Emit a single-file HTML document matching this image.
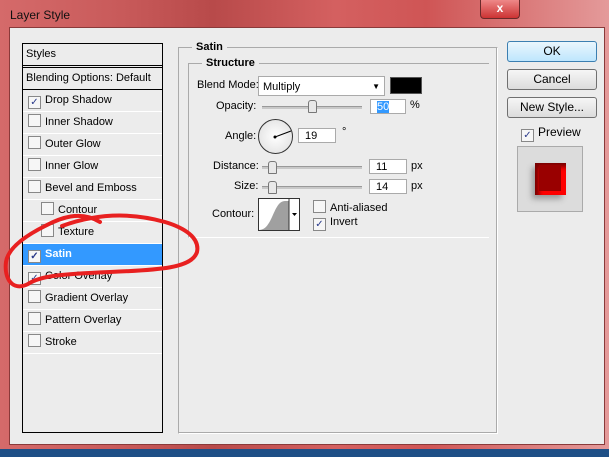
<!DOCTYPE html><html><head><style>
body{margin:0;width:609px;height:457px;overflow:hidden;background:#2a5a8a;font-family:"Liberation Sans",Arial,sans-serif;font-size:11px;color:#000;position:relative}
.a{position:absolute;white-space:nowrap}
.win{left:0;top:0;width:609px;height:449px;background:linear-gradient(90deg,#d56a6a,#c85a5a 20%,#b84a4a 35%,#d46060 55%,#cf5555 70%,#e49a9a 100%)}
.client{left:9px;top:27px;width:594px;height:416px;background:#ececec;border:1px solid #8a3a3a}
.row{position:absolute;left:0;width:139px;height:21px;border-bottom:1px solid #fff;line-height:21px;white-space:nowrap}
.cb{display:inline-block;width:11px;height:11px;border:1px solid #888;background:#f6f6f6;vertical-align:-2px;margin-right:4px;position:relative;font-size:10px;line-height:11px;text-align:center;color:#2a3a8a}
.btn{position:absolute;left:507px;width:88px;height:19px;border:1px solid #707070;border-radius:3px;background:linear-gradient(#f6f6f6,#dcdcdc);text-align:center;line-height:19px;font-size:12px}
.inp{position:absolute;background:#fff;border:1px solid #aaa;height:15px;line-height:15px;padding-left:6px;box-sizing:border-box;width:38px}
.sl{position:absolute;height:2px;background:#c8c8c8;border-top:1px solid #999;width:100px}
.th{position:absolute;width:7px;height:11px;background:#e8e8e8;border:1px solid #777;border-radius:3px 3px 1px 1px}
</style></head><body>
<div class="a win"></div>
<div class="a" style="left:10px;top:8px;font-size:12px;color:#111">Layer Style</div>
<div class="a" style="left:480px;top:0;width:38px;height:18px;border:1px solid #6a2a2a;border-top:none;border-radius:0 0 4px 4px;background:linear-gradient(#e88,#c33);color:#fff;text-align:center;font-weight:bold;font-size:12px;line-height:16px">x</div>
<div class="a client"></div>
<div class="a" style="left:22px;top:43px;width:139px;height:388px;border:1px solid #000;background:#ececec">
<div class="row" style="top:0;height:21px;border-bottom:3px double #000">&nbsp;Styles</div>
<div class="row" style="top:24px;border-bottom:1px solid #000">&nbsp;Blending Options: Default</div>
<div class="row" style="top:46px;padding-left:5px;width:134px"><span class="cb">✓</span>Drop Shadow</div>
<div class="row" style="top:68px;padding-left:5px;width:134px"><span class="cb"></span>Inner Shadow</div>
<div class="row" style="top:90px;padding-left:5px;width:134px"><span class="cb"></span>Outer Glow</div>
<div class="row" style="top:112px;padding-left:5px;width:134px"><span class="cb"></span>Inner Glow</div>
<div class="row" style="top:134px;padding-left:5px;width:134px"><span class="cb"></span>Bevel and Emboss</div>
<div class="row" style="top:156px;padding-left:18px;width:121px"><span class="cb"></span>Contour</div>
<div class="row" style="top:178px;padding-left:18px;width:121px"><span class="cb"></span>Texture</div>
<div class="row" style="top:200px;padding-left:5px;width:134px;background:#3399ff;color:#fff;font-weight:bold"><span class="cb">✓</span>Satin</div>
<div class="row" style="top:222px;padding-left:5px;width:134px"><span class="cb">✓</span>Color Overlay</div>
<div class="row" style="top:244px;padding-left:5px;width:134px"><span class="cb"></span>Gradient Overlay</div>
<div class="row" style="top:266px;padding-left:5px;width:134px"><span class="cb"></span>Pattern Overlay</div>
<div class="row" style="top:288px;padding-left:5px;width:134px"><span class="cb"></span>Stroke</div>
</div>
<div class="a" style="left:178px;top:47px;width:318px;height:385px;border:1px solid #aaa;border-right-color:#fff;border-bottom-color:#fff;box-shadow:inset -1px -1px #aaa"></div>
<div class="a" style="left:192px;top:41px;background:#ececec;padding:0 4px;font-weight:bold">Satin</div>
<div class="a" style="left:188px;top:63px;width:300px;height:173px;border:1px solid #aaa;border-right:none;border-bottom-color:#fff"></div>
<div class="a" style="left:202px;top:57px;background:#ececec;padding:0 4px;font-weight:bold">Structure</div>
<div class="a" style="left:197px;top:79px">Blend Mode:</div>
<div class="a" style="left:258px;top:76px;width:127px;height:20px;background:#fff;border:1px solid #aaa;line-height:20px;padding-left:4px;box-sizing:border-box">Multiply<span style="position:absolute;right:4px;font-size:8px">▼</span></div>
<div class="a" style="left:390px;top:77px;width:30px;height:15px;background:#000;border:1px solid #555"></div>
<div class="a" style="left:216px;top:100px">Opacity:</div>
<div class="sl" style="left:262px;top:106px"></div><div class="th" style="left:308px;top:100px"></div>
<div class="inp" style="left:370px;top:99px;width:36px"><span style="background:#3399ff;color:#fff">50</span></div>
<div class="a" style="left:410px;top:99px">%</div>
<div class="a" style="left:225px;top:130px">Angle:</div>
<div class="a" style="left:258px;top:119px;width:33px;height:33px;border-radius:50%;border:1px solid #333;background:radial-gradient(#fff,#ddd)"></div>
<svg class="a" style="left:258px;top:119px" width="36" height="36"><line x1="17" y1="18" x2="33" y2="12" stroke="#000" stroke-width="1"/><circle cx="17" cy="18" r="1.5"/></svg>
<div class="inp" style="left:298px;top:128px">19</div>
<div class="a" style="left:342px;top:126px">°</div>
<div class="a" style="left:213px;top:160px">Distance:</div>
<div class="sl" style="left:262px;top:166px"></div><div class="th" style="left:268px;top:161px"></div>
<div class="inp" style="left:369px;top:159px">11</div><div class="a" style="left:411px;top:160px">px</div>
<div class="a" style="left:234px;top:180px">Size:</div>
<div class="sl" style="left:262px;top:186px"></div><div class="th" style="left:268px;top:181px"></div>
<div class="inp" style="left:369px;top:179px">14</div><div class="a" style="left:411px;top:180px">px</div>
<div class="a" style="left:212px;top:208px">Contour:</div>
<div class="a" style="left:258px;top:198px;width:40px;height:31px;border:1px solid #333;background:#fff;overflow:hidden">
<svg width="40" height="31"><path d="M0 31 C14 31 14 2 26 2 L30 2 L30 31Z" fill="#a0a0a0"/><line x1="30" y1="0" x2="30" y2="31" stroke="#333"/><path d="M33 14h5l-2.5 3z"/></svg></div>
<div class="a" style="left:313px;top:200px"><span class="cb"></span>Anti-aliased</div>
<div class="a" style="left:313px;top:216px"><span class="cb">✓</span>Invert</div>
<div class="btn" style="top:41px;border-color:#3c7fb1;background:linear-gradient(#eaf6fd,#bee6fd)">OK</div>
<div class="btn" style="top:69px">Cancel</div>
<div class="btn" style="top:97px">New Style...</div>
<div class="a" style="left:521px;top:125px;font-size:12px"><span class="cb">✓</span>Preview</div>
<div class="a" style="left:517px;top:146px;width:64px;height:64px;border:1px solid #aaa;background:#dcdcdc">
<div class="a" style="left:14px;top:20px;width:30px;height:32px;background:#999;filter:blur(3px)"></div>
<div class="a" style="left:17px;top:16px;width:31px;height:32px;background:#f00;box-shadow:inset 4px 4px 5px #700"></div>
<div class="a" style="left:21px;top:18px;width:22px;height:26px;background:#900"></div></div>
<svg class="a" style="left:0;top:0" width="609" height="457"><path d="M100 222 C80 210 60 218 45 226 C25 236 8 248 6 262 C4 278 12 292 28 284 C40 276 60 274 110 272 C160 270 192 268 197 252 C200 238 185 228 165 222 C130 212 95 214 62 226" fill="none" stroke="#e82020" stroke-width="4" stroke-linecap="round"/></svg>
<div class="a" style="left:0;top:449px;width:609px;height:8px;background:#1e4f86"></div>
</body></html>
